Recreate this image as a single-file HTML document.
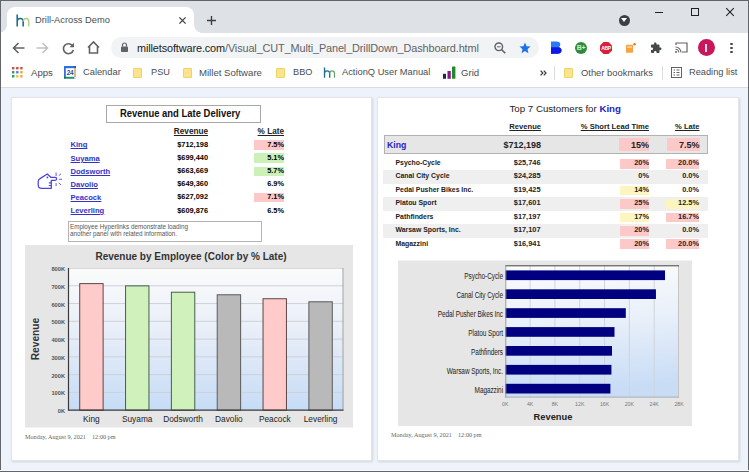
<!DOCTYPE html>
<html><head><meta charset="utf-8">
<style>
*{box-sizing:border-box}
html,body{margin:0;padding:0}
body{width:749px;height:472px;overflow:hidden;position:relative;background:#eef2fa;font-family:"Liberation Sans",sans-serif;color:#000}
.a{position:absolute;white-space:pre}
.ui{font-family:"Liberation Sans",sans-serif;color:#4a4d51}
svg{position:absolute;overflow:visible}
</style></head><body>
<!-- ========== BROWSER CHROME ========== -->
<div class="a" style="left:0;top:0;width:749px;height:33px;background:#dee1e6"></div>
<!-- tab -->
<div class="a" style="left:7px;top:7px;width:187px;height:27px;background:#fff;border-radius:8px 8px 0 0"></div>
<div class="a" style="left:-1px;top:25px;width:8px;height:8px;background:radial-gradient(circle at 0 0,#dee1e6 7.5px,#fff 8px)"></div>
<div class="a" style="left:194px;top:25px;width:8px;height:8px;background:radial-gradient(circle at 100% 0,#dee1e6 7.5px,#fff 8px)"></div>
<svg style="left:15px;top:13.5px" width="16" height="14" viewBox="0 0 16 14">
  <path d="M2.2 0.5 V12.5 M2.2 7.5 Q2.2 4.5 5.2 4.5 Q8.2 4.5 8.2 7.5 V12.5" stroke="#1d6f91" stroke-width="1.6" fill="none"/>
  <path d="M8.2 7.5 Q8.2 4.5 11 4.5 Q13.8 4.5 13.8 7.5 V12.5" stroke="#b9c97e" stroke-width="1.4" fill="none"/>
</svg>
<div class="a ui" style="left:35px;top:14px;font-size:9.3px;line-height:12px">Drill-Across Demo</div>
<svg style="left:178.8px;top:16.8px" width="7" height="7" viewBox="0 0 7 7"><path d="M0.4 0.4 L6.6 6.6 M6.6 0.4 L0.4 6.6" stroke="#3c4043" stroke-width="1.25"/></svg>
<svg style="left:207.3px;top:15.8px" width="9" height="9" viewBox="0 0 9 9"><path d="M4.5 0 V9 M0 4.5 H9" stroke="#3c4043" stroke-width="1.4"/></svg>
<!-- dark circle -->
<div class="a" style="left:618.5px;top:14.5px;width:11px;height:11px;border-radius:50%;background:#3c4043"></div>
<svg style="left:620px;top:17px" width="8" height="6" viewBox="0 0 8 6"><path d="M1 1 H7 L4 5 Z" fill="#fff"/></svg>
<!-- window controls -->
<div class="a" style="left:654.5px;top:11.5px;width:8px;height:1.2px;background:#202124"></div>
<div class="a" style="left:690.5px;top:8px;width:8px;height:8px;border:1.1px solid #202124"></div>
<svg style="left:726px;top:8px" width="8" height="8" viewBox="0 0 8 8"><path d="M0.2 0.2 L7.8 7.8 M7.8 0.2 L0.2 7.8" stroke="#202124" stroke-width="1.05"/></svg>

<!-- toolbar -->
<div class="a" style="left:0;top:33px;width:749px;height:55px;background:#fff;border-bottom:1px solid #dadce0"></div>
<!-- nav icons -->
<svg style="left:12px;top:42px" width="13" height="12" viewBox="0 0 13 12"><path d="M12.5 6 H1.5 M6.5 1 L1.5 6 L6.5 11" stroke="#5f6368" stroke-width="1.6" fill="none"/></svg>
<svg style="left:36px;top:42px" width="13" height="12" viewBox="0 0 13 12"><path d="M0.5 6 H11.5 M6.5 1 L11.5 6 L6.5 11" stroke="#bdc1c6" stroke-width="1.6" fill="none"/></svg>
<svg style="left:62px;top:42px" width="13" height="13" viewBox="0 0 13 13"><path d="M10.8 4.2 A5 5 0 1 0 11.3 8" stroke="#5f6368" stroke-width="1.6" fill="none"/><path d="M12 0.8 V5.2 H7.6 Z" fill="#5f6368"/></svg>
<svg style="left:87px;top:41px" width="13" height="13" viewBox="0 0 13 13"><path d="M1 6.5 L6.5 1 L12 6.5 M2.5 5.5 V12 H10.5 V5.5" stroke="#5f6368" stroke-width="1.6" fill="none" stroke-linejoin="miter"/></svg>
<!-- omnibox -->
<div class="a" style="left:111px;top:37px;width:428px;height:21px;background:#f1f3f4;border-radius:11px"></div>
<svg style="left:121px;top:42px" width="7" height="10" viewBox="0 0 7 10"><path d="M1.5 4.5 V3 A2 2 0 0 1 5.5 3 V4.5" stroke="#5f6368" stroke-width="1.2" fill="none"/><rect x="0" y="4.5" width="7" height="5.5" rx="0.8" fill="#5f6368"/></svg>
<div class="a ui" style="left:137px;top:42px;font-size:10.9px;line-height:13px;letter-spacing:-0.12px;color:#202124">milletsoftware.com<span style="color:#5f6368">/Visual_CUT_Multi_Panel_DrillDown_Dashboard.html</span></div>
<svg style="left:494px;top:42px" width="12" height="12" viewBox="0 0 12 12"><circle cx="4.8" cy="4.8" r="3.8" stroke="#5f6368" stroke-width="1.4" fill="none"/><path d="M7.5 7.5 L11.3 11.3" stroke="#5f6368" stroke-width="1.6"/><path d="M3 4.8 H6.6" stroke="#5f6368" stroke-width="1"/></svg>
<svg style="left:519px;top:42px" width="12" height="12" viewBox="0 0 24 24"><path d="M12 1 L15.1 8.6 L23 9.2 L17 14.5 L18.9 22.5 L12 18.2 L5.1 22.5 L7 14.5 L1 9.2 L8.9 8.6 Z" fill="#1a73e8"/></svg>
<!-- extensions -->
<svg style="left:551px;top:41px" width="11" height="13" viewBox="0 0 11 13"><path d="M0 0.5 H5.5 Q9.3 0.5 9.3 3.4 Q9.3 5 8 5.8 Q10.5 6.8 10.5 9.3 Q10.5 12.7 6.5 12.7 H0 Z" fill="#2a7af2"/><path d="M0 6.3 H6.8 Q10.5 6.6 10.5 9.3 Q10.5 12.7 6.5 12.7 H0 Z" fill="#0c18e6"/></svg>
<div class="a" style="left:575px;top:42px;width:12px;height:12px;border-radius:50%;background:#2e8b3e"></div>
<div class="a" style="left:575px;top:42px;width:12px;height:12px;font:bold 7px/12px 'Liberation Sans',sans-serif;color:#c8f5c8;text-align:center;letter-spacing:-0.3px">B+</div>
<svg style="left:600px;top:42px" width="12" height="12" viewBox="0 0 12 12"><path d="M3.5 0 H8.5 L12 3.5 V8.5 L8.5 12 H3.5 L0 8.5 V3.5 Z" fill="#d9203a"/></svg>
<div class="a" style="left:599px;top:42px;width:14px;height:12px;font:bold 5px/12px 'Liberation Sans',sans-serif;color:#fff;text-align:center;letter-spacing:-0.3px">ABP</div>
<svg style="left:626px;top:43px" width="10" height="10" viewBox="0 0 10 10"><rect x="0" y="1.8" width="7" height="8" rx="0.5" fill="#f7a440"/><rect x="1.2" y="3.3" width="4.6" height="1.6" fill="#fcd59b"/><circle cx="8.6" cy="1.2" r="1.2" fill="#e8703a"/></svg>
<svg style="left:650px;top:42px" width="12" height="12" viewBox="0 0 24 24"><path d="M20.5 11H19V7c0-1.1-.9-2-2-2h-4V3.5C13 2.12 11.88 1 10.5 1S8 2.12 8 3.5V5H4c-1.1 0-1.99.9-1.99 2v3.8H3.5c1.49 0 2.7 1.21 2.7 2.7s-1.21 2.7-2.7 2.7H2V20c0 1.1.9 2 2 2h3.8v-1.5c0-1.49 1.21-2.7 2.7-2.7 1.49 0 2.7 1.21 2.7 2.7V22H17c1.1 0 2-.9 2-2v-4h1.5c1.38 0 2.5-1.12 2.5-2.5S21.88 11 20.5 11z" fill="#45484d"/></svg>
<svg style="left:675px;top:42px" width="13" height="11" viewBox="0 0 13 11"><path d="M1 3 V1 H12 V10 H7" stroke="#5f6368" stroke-width="1.2" fill="none"/><path d="M0.5 5 A5.5 5.5 0 0 1 6 10.5 M0.5 7.2 A3.3 3.3 0 0 1 3.8 10.5" stroke="#5f6368" stroke-width="1.1" fill="none"/><circle cx="1" cy="10" r="1" fill="#5f6368"/></svg>
<div class="a" style="left:697.5px;top:39.2px;width:17px;height:17px;border-radius:50%;background:#c8175a"></div>
<div class="a" style="left:705.2px;top:44px;width:1.6px;height:7.8px;background:#fcd6e4"></div>
<div class="a" style="left:730.3px;top:43px;width:2.3px;height:2.3px;border-radius:50%;background:#45484d;box-shadow:0 3.95px 0 #45484d,0 7.9px 0 #45484d"></div>

<!-- bookmarks -->
<svg style="left:12px;top:67px" width="12" height="12" viewBox="0 0 12 12"><rect x="0.0" y="0.00" width="2.4" height="2.4" fill="#d54b3d"/><rect x="4.1" y="0.00" width="2.4" height="2.4" fill="#d54b3d"/><rect x="8.2" y="0.00" width="2.4" height="2.4" fill="#d54b3d"/><rect x="0.0" y="4.05" width="2.4" height="2.4" fill="#2a9a5a"/><rect x="4.1" y="4.05" width="2.4" height="2.4" fill="#4a86e8"/><rect x="8.2" y="4.05" width="2.4" height="2.4" fill="#f0a830"/><rect x="0.0" y="8.10" width="2.4" height="2.4" fill="#2a9a5a"/><rect x="4.1" y="8.10" width="2.4" height="2.4" fill="#f4c030"/><rect x="8.2" y="8.10" width="2.4" height="2.4" fill="#f0a830"/></svg>
<div class="a ui" style="left:31px;top:65.9px;font-size:9.6px;line-height:13px">Apps</div>
<svg style="left:64px;top:66.3px" width="12" height="12.5" viewBox="0 0 12 12.5"><rect x="0" y="0" width="12" height="12.5" fill="#2f6fe0"/><rect x="10.3" y="1.8" width="1.7" height="9" fill="#f6bf26"/><rect x="1.8" y="10.8" width="8.5" height="1.7" fill="#1e9a4a"/><rect x="0" y="10.8" width="1.8" height="1.7" fill="#1b6e3a"/><rect x="10.3" y="0" width="1.7" height="1.8" fill="#1a5a8a"/><rect x="10.3" y="10.8" width="1.7" height="1.7" fill="#fff"/><rect x="1.8" y="2.2" width="8.5" height="8.6" fill="#fff"/><text x="6" y="9.2" font-size="6.4" font-family="Liberation Sans" fill="#2a4aa0" text-anchor="middle" font-weight="bold" letter-spacing="-0.3">24</text></svg>
<div class="a ui" style="left:83px;top:65.9px;font-size:9.3px;line-height:13px">Calendar</div>
<div class="a" style="left:133px;top:67.5px;width:9px;height:10.5px;background:#fbe48c;border:1px solid #ecd36a;border-radius:1px"></div>
<div class="a ui" style="left:151px;top:65.9px;font-size:9.2px;line-height:13px">PSU</div>
<div class="a" style="left:183px;top:67.5px;width:9px;height:10.5px;background:#fbe48c;border:1px solid #ecd36a;border-radius:1px"></div>
<div class="a ui" style="left:199px;top:65.9px;font-size:9.6px;line-height:13px">Millet Software</div>
<div class="a" style="left:276px;top:67.5px;width:9px;height:10.5px;background:#fbe48c;border:1px solid #ecd36a;border-radius:1px"></div>
<div class="a ui" style="left:293px;top:65.9px;font-size:9.2px;line-height:13px">BBO</div>
<svg style="left:322px;top:67px" width="15" height="12" viewBox="0 0 16 14">
  <path d="M2.2 0.5 V12.5 M2.2 7.5 Q2.2 4.5 5.2 4.5 Q8.2 4.5 8.2 7.5 V12.5" stroke="#1d6f91" stroke-width="1.6" fill="none"/>
  <path d="M8.2 7.5 Q8.2 4.5 11 4.5 Q13.8 4.5 13.8 7.5 V12.5" stroke="#6aa06a" stroke-width="1.4" fill="none"/>
</svg>
<div class="a ui" style="left:342px;top:65.9px;font-size:9.3px;line-height:13px">ActionQ User Manual</div>
<svg style="left:443px;top:66px" width="13" height="13" viewBox="0 0 13 13"><rect x="0" y="7.8" width="3" height="5" fill="#1f2a4a"/><rect x="4.5" y="5" width="3.3" height="7.8" fill="#8a1a8a"/><rect x="9" y="0.6" width="3.4" height="12.2" rx="0.6" fill="#1e8a2a"/></svg>
<div class="a ui" style="left:461px;top:65.9px;font-size:9.6px;line-height:13px">Grid</div>
<svg style="left:539.5px;top:70px" width="7" height="6" viewBox="0 0 7 6"><path d="M0.6 0.6 L2.8 3 L0.6 5.4 M3.8 0.6 L6 3 L3.8 5.4" stroke="#3c4043" stroke-width="1.3" fill="none"/></svg>
<div class="a" style="left:554px;top:66px;width:1px;height:14px;background:#dadce0"></div>
<div class="a" style="left:564px;top:67.5px;width:9px;height:10.5px;background:#fbe48c;border:1px solid #ecd36a;border-radius:1px"></div>
<div class="a ui" style="left:581px;top:65.9px;font-size:9.4px;line-height:13px">Other bookmarks</div>
<div class="a" style="left:662px;top:66px;width:1px;height:14px;background:#dadce0"></div>
<svg style="left:671px;top:67px" width="11" height="11" viewBox="0 0 11 11"><rect x="0.5" y="0.5" width="10" height="10" stroke="#5f6368" fill="none"/><path d="M2.5 3 H4 M2.5 5.5 H4 M2.5 8 H4 M5.5 3 H8.5 M5.5 5.5 H8.5 M5.5 8 H8.5" stroke="#5f6368"/></svg>
<div class="a ui" style="left:689px;top:65.9px;font-size:9.25px;line-height:13px">Reading list</div>

<!-- frame -->
<div class="a" style="left:0;top:0;width:749px;height:1px;background:#62666b"></div>
<div class="a" style="left:0;top:0;width:1px;height:472px;background:#62666b"></div>
<div class="a" style="left:748px;top:0;width:1px;height:472px;background:#62666b"></div>
<div class="a" style="left:0;top:470px;width:749px;height:1px;background:#f8faff"></div><div class="a" style="left:0;top:471px;width:749px;height:1px;background:#62666b"></div>

<!-- ========== PAGE ========== -->
<div id="lp" class="a" style="left:11px;top:97px;width:361px;height:364px;background:#fff;border:1px solid #e2e4ea;box-shadow:1px 1px 2px rgba(0,0,0,0.12)"></div>
<div id="rp" class="a" style="left:377px;top:97px;width:362px;height:364px;background:#fff;border:1px solid #e2e4ea;box-shadow:1px 1px 2px rgba(0,0,0,0.12)"></div>


<!-- ===== LEFT PANEL ===== -->
<div class="a" style="left:106px;top:105px;width:155px;height:18px;border:1px solid #a8a8a8;background:#fff"></div>
<div class="a" style="left:120.3px;top:106px;font:bold 10.4px/15px 'Liberation Sans',sans-serif;color:#111;transform:scaleX(0.91);transform-origin:0 50%">Revenue and Late Delivery</div>
<div class="a" style="left:150px;top:126.8px;width:58px;text-align:right;font:bold 8.2px/10px 'Liberation Sans',sans-serif;color:#222;text-decoration:underline">Revenue</div>
<div class="a" style="left:230px;top:126.8px;width:54px;text-align:right;font:bold 8.2px/10px 'Liberation Sans',sans-serif;color:#222;text-decoration:underline">% Late</div>
<div class="a" style="left:70.5px;top:140.3px;font:bold 7.6px/10px 'Liberation Sans',sans-serif;color:#3232c8;text-decoration:underline">King</div>
<div class="a" style="left:150px;top:139.8px;width:58px;text-align:right;font:bold 7.4px/10px 'Liberation Sans',sans-serif">$712,198</div>
<div class="a" style="left:254px;top:140.2px;width:30px;height:9.6px;background:#fcc8c8"></div>
<div class="a" style="left:230px;top:139.8px;width:54px;text-align:right;font:bold 7.4px/10px 'Liberation Sans',sans-serif">7.5%</div>
<div class="a" style="left:70.5px;top:153.5px;font:bold 7.6px/10px 'Liberation Sans',sans-serif;color:#3232c8;text-decoration:underline">Suyama</div>
<div class="a" style="left:150px;top:153.0px;width:58px;text-align:right;font:bold 7.4px/10px 'Liberation Sans',sans-serif">$699,440</div>
<div class="a" style="left:254px;top:153.4px;width:30px;height:9.6px;background:#ccf0b8"></div>
<div class="a" style="left:230px;top:153.0px;width:54px;text-align:right;font:bold 7.4px/10px 'Liberation Sans',sans-serif">5.1%</div>
<div class="a" style="left:70.5px;top:166.7px;font:bold 7.6px/10px 'Liberation Sans',sans-serif;color:#3232c8;text-decoration:underline">Dodsworth</div>
<div class="a" style="left:150px;top:166.2px;width:58px;text-align:right;font:bold 7.4px/10px 'Liberation Sans',sans-serif">$663,669</div>
<div class="a" style="left:254px;top:166.6px;width:30px;height:9.6px;background:#ccf0b8"></div>
<div class="a" style="left:230px;top:166.2px;width:54px;text-align:right;font:bold 7.4px/10px 'Liberation Sans',sans-serif">5.7%</div>
<div class="a" style="left:70.5px;top:179.8px;font:bold 7.6px/10px 'Liberation Sans',sans-serif;color:#3232c8;text-decoration:underline">Davolio</div>
<div class="a" style="left:150px;top:179.3px;width:58px;text-align:right;font:bold 7.4px/10px 'Liberation Sans',sans-serif">$649,360</div>
<div class="a" style="left:230px;top:179.3px;width:54px;text-align:right;font:bold 7.4px/10px 'Liberation Sans',sans-serif">6.9%</div>
<div class="a" style="left:70.5px;top:192.9px;font:bold 7.6px/10px 'Liberation Sans',sans-serif;color:#3232c8;text-decoration:underline">Peacock</div>
<div class="a" style="left:150px;top:192.4px;width:58px;text-align:right;font:bold 7.4px/10px 'Liberation Sans',sans-serif">$627,092</div>
<div class="a" style="left:254px;top:192.8px;width:30px;height:9.6px;background:#fcc8c8"></div>
<div class="a" style="left:230px;top:192.4px;width:54px;text-align:right;font:bold 7.4px/10px 'Liberation Sans',sans-serif">7.1%</div>
<div class="a" style="left:70.5px;top:206.0px;font:bold 7.6px/10px 'Liberation Sans',sans-serif;color:#3232c8;text-decoration:underline">Leverling</div>
<div class="a" style="left:150px;top:205.5px;width:58px;text-align:right;font:bold 7.4px/10px 'Liberation Sans',sans-serif">$609,876</div>
<div class="a" style="left:230px;top:205.5px;width:54px;text-align:right;font:bold 7.4px/10px 'Liberation Sans',sans-serif">6.5%</div>

<svg style="left:37px;top:171px" width="26" height="19" viewBox="0 0 26 19">
 <path d="M1.2 10.5 Q1.2 8.6 3 7.6 L10.3 3 L13.8 6.3 H18.2 Q19.6 6.3 19.6 7.8 Q19.6 9.3 18.2 9.3 H14.3 V17.3 H4.5 Q1.2 17.3 1.2 14 Z" stroke="#4c44dc" stroke-width="1.25" fill="none" stroke-linejoin="round"/>
 <path d="M11.8 11.9 H14.3 M11.8 14.5 H14.3" stroke="#4c44dc" stroke-width="1.2"/>
 <circle cx="10.4" cy="6.4" r="0.9" fill="#4c44dc"/>
 <path d="M19.1 1.6 V5.1 M19.1 12.1 V15.1 M21.8 4.6 L24.1 2.7 M21.8 12 L24.1 13.9 M21.9 8.3 H25" stroke="#5a52e8" stroke-width="0.95"/>
</svg>
<div class="a" style="left:68px;top:221px;width:194px;height:21px;border:1px solid #b4b4b4"></div>
<div class="a" style="left:70px;top:222.5px;font:6.3px/7.2px 'Liberation Sans',sans-serif;color:#555">Employee Hyperlinks demonstrate loading
another panel with related information.</div>

<!-- left chart -->
<svg style="left:0;top:0" width="749" height="472" viewBox="0 0 749 472">
<defs><linearGradient id="g1" x1="0" y1="0" x2="0" y2="1"><stop offset="0" stop-color="#fbfbfb"/><stop offset="0.45" stop-color="#e8eef8"/><stop offset="1" stop-color="#c6dcf6"/></linearGradient><linearGradient id="g2" x1="0" y1="0" x2="0.12" y2="1"><stop offset="0" stop-color="#fcfcfc"/><stop offset="0.45" stop-color="#eaf1fa"/><stop offset="1" stop-color="#c8dcf6"/></linearGradient></defs>
<rect x="25" y="245" width="328" height="182.5" fill="#e6e6e6"/>
<rect x="68.5" y="268.0" width="275.0" height="142.2" fill="url(#g1)"/>
<line x1="68.5" y1="285.77" x2="343.5" y2="285.77" stroke="#cdd1d8" stroke-width="1"/>
<line x1="68.5" y1="303.55" x2="343.5" y2="303.55" stroke="#cdd1d8" stroke-width="1"/>
<line x1="68.5" y1="321.32" x2="343.5" y2="321.32" stroke="#cdd1d8" stroke-width="1"/>
<line x1="68.5" y1="339.10" x2="343.5" y2="339.10" stroke="#cdd1d8" stroke-width="1"/>
<line x1="68.5" y1="356.88" x2="343.5" y2="356.88" stroke="#cdd1d8" stroke-width="1"/>
<line x1="68.5" y1="374.65" x2="343.5" y2="374.65" stroke="#cdd1d8" stroke-width="1"/>
<line x1="68.5" y1="392.42" x2="343.5" y2="392.42" stroke="#cdd1d8" stroke-width="1"/>
<line x1="68.5" y1="268.5" x2="343.5" y2="268.5" stroke="#d8d8d8" stroke-width="1"/>
<line x1="343.0" y1="268.0" x2="343.0" y2="410.2" stroke="#a0a0a0" stroke-width="1"/>
<rect x="79.72" y="283.61" width="23.4" height="126.59" fill="#ffcaca" stroke="#5e4646" stroke-width="1"/>
<rect x="125.55" y="285.87" width="23.4" height="124.33" fill="#d0f0bc" stroke="#46604a" stroke-width="1"/>
<rect x="171.38" y="292.23" width="23.4" height="117.97" fill="#d0f0bc" stroke="#46604a" stroke-width="1"/>
<rect x="217.22" y="294.78" width="23.4" height="115.42" fill="#b9b9b9" stroke="#5a5a5a" stroke-width="1"/>
<rect x="263.05" y="298.73" width="23.4" height="111.47" fill="#ffcaca" stroke="#5e4646" stroke-width="1"/>
<rect x="308.88" y="301.79" width="23.4" height="108.41" fill="#b9b9b9" stroke="#5a5a5a" stroke-width="1"/>
<line x1="68.5" y1="268.0" x2="68.5" y2="410.7" stroke="#3a3a3a" stroke-width="1.2"/>
<line x1="68.5" y1="410.2" x2="343.5" y2="410.2" stroke="#3a3a3a" stroke-width="1.2"/>
</svg>
<div class="a" style="left:35px;top:265.0px;width:30px;text-align:right;font:bold 5.7px/8px 'Liberation Sans',sans-serif;color:#555">800K</div>
<div class="a" style="left:35px;top:282.8px;width:30px;text-align:right;font:bold 5.7px/8px 'Liberation Sans',sans-serif;color:#555">700K</div>
<div class="a" style="left:35px;top:300.6px;width:30px;text-align:right;font:bold 5.7px/8px 'Liberation Sans',sans-serif;color:#555">600K</div>
<div class="a" style="left:35px;top:318.3px;width:30px;text-align:right;font:bold 5.7px/8px 'Liberation Sans',sans-serif;color:#555">500K</div>
<div class="a" style="left:35px;top:336.1px;width:30px;text-align:right;font:bold 5.7px/8px 'Liberation Sans',sans-serif;color:#555">400K</div>
<div class="a" style="left:35px;top:353.9px;width:30px;text-align:right;font:bold 5.7px/8px 'Liberation Sans',sans-serif;color:#555">300K</div>
<div class="a" style="left:35px;top:371.6px;width:30px;text-align:right;font:bold 5.7px/8px 'Liberation Sans',sans-serif;color:#555">200K</div>
<div class="a" style="left:35px;top:389.4px;width:30px;text-align:right;font:bold 5.7px/8px 'Liberation Sans',sans-serif;color:#555">100K</div>
<div class="a" style="left:35px;top:407.2px;width:30px;text-align:right;font:bold 5.7px/8px 'Liberation Sans',sans-serif;color:#555">0K</div>
<div class="a" style="left:61.4px;top:412.5px;width:60px;text-align:center;font:8.3px/12px 'Liberation Sans',sans-serif;color:#222">King</div>
<div class="a" style="left:107.2px;top:412.5px;width:60px;text-align:center;font:8.3px/12px 'Liberation Sans',sans-serif;color:#222">Suyama</div>
<div class="a" style="left:153.1px;top:412.5px;width:60px;text-align:center;font:8.3px/12px 'Liberation Sans',sans-serif;color:#222">Dodsworth</div>
<div class="a" style="left:198.9px;top:412.5px;width:60px;text-align:center;font:8.3px/12px 'Liberation Sans',sans-serif;color:#222">Davolio</div>
<div class="a" style="left:244.8px;top:412.5px;width:60px;text-align:center;font:8.3px/12px 'Liberation Sans',sans-serif;color:#222">Peacock</div>
<div class="a" style="left:290.6px;top:412.5px;width:60px;text-align:center;font:8.3px/12px 'Liberation Sans',sans-serif;color:#222">Leverling</div>
<div class="a" style="left:14px;top:333px;width:44px;height:12px;transform:rotate(-90deg);text-align:center;font:bold 10.2px/12px 'Liberation Sans',sans-serif;color:#333">Revenue</div>
<div class="a" style="left:27px;top:250px;width:328px;text-align:center;font:bold 10px/14px 'Liberation Sans',sans-serif;color:#333">Revenue by Employee (Color by % Late)</div>
<div class="a" style="left:25px;top:432px;font:6.2px/9px 'Liberation Serif',serif;color:#666">Monday, August 9, 2021<span style="margin-left:6px">12:00 pm</span></div>

<!-- ===== RIGHT PANEL ===== -->
<div class="a" style="left:509.5px;top:102px;font:9.7px/13px 'Liberation Sans',sans-serif;color:#222">Top 7 Customers for <b style="color:#2323c8">King</b></div>
<div class="a" style="left:480px;top:121.5px;width:61px;text-align:right;font:bold 7.6px/10px 'Liberation Sans',sans-serif;color:#222;text-decoration:underline">Revenue</div>
<div class="a" style="left:560px;top:121.5px;width:89px;text-align:right;font:bold 7.6px/10px 'Liberation Sans',sans-serif;color:#222;text-decoration:underline">% Short Lead Time</div>
<div class="a" style="left:660px;top:121.5px;width:39.5px;text-align:right;font:bold 7.6px/10px 'Liberation Sans',sans-serif;color:#222;text-decoration:underline">% Late</div>
<div class="a" style="left:383.5px;top:134.5px;width:324px;height:19.5px;background:#e6e6e6;border:1.8px solid #b2b2b2"></div>
<div class="a" style="left:619px;top:138px;width:30px;height:13px;background:#fcc8c8"></div>
<div class="a" style="left:666.5px;top:138px;width:33px;height:13px;background:#fcc8c8"></div>
<div class="a" style="left:387px;top:138.5px;font:bold 8.7px/13px 'Liberation Sans',sans-serif;color:#2323c8">King</div>
<div class="a" style="left:480px;top:138.5px;width:61px;text-align:right;font:bold 9px/13px 'Liberation Sans',sans-serif;color:#222">$712,198</div>
<div class="a" style="left:590px;top:138.5px;width:59px;text-align:right;font:bold 9px/13px 'Liberation Sans',sans-serif;color:#222">15%</div>
<div class="a" style="left:640px;top:138.5px;width:59.5px;text-align:right;font:bold 9px/13px 'Liberation Sans',sans-serif;color:#222">7.5%</div>
<div class="a" style="left:620px;top:158.91px;width:29px;height:9.6px;background:#fcc8c8"></div>
<div class="a" style="left:666px;top:158.91px;width:33px;height:9.6px;background:#fcc8c8"></div>
<div class="a" style="left:395.5px;top:158.02px;font:bold 6.9px/10px 'Liberation Sans',sans-serif;color:#222">Psycho-Cycle</div>
<div class="a" style="left:480px;top:158.02px;width:60.5px;text-align:right;font:bold 7.4px/10px 'Liberation Sans',sans-serif;color:#222">$25,746</div>
<div class="a" style="left:600px;top:158.02px;width:49px;text-align:right;font:bold 7.4px/10px 'Liberation Sans',sans-serif;color:#222">20%</div>
<div class="a" style="left:650px;top:158.02px;width:49px;text-align:right;font:bold 7.4px/10px 'Liberation Sans',sans-serif;color:#222">20.0%</div>
<div class="a" style="left:383px;top:170.43px;width:324.5px;height:13.43px;background:#efefef"></div>
<div class="a" style="left:395.5px;top:171.45px;font:bold 6.9px/10px 'Liberation Sans',sans-serif;color:#222">Canal City Cycle</div>
<div class="a" style="left:480px;top:171.45px;width:60.5px;text-align:right;font:bold 7.4px/10px 'Liberation Sans',sans-serif;color:#222">$24,285</div>
<div class="a" style="left:600px;top:171.45px;width:49px;text-align:right;font:bold 7.4px/10px 'Liberation Sans',sans-serif;color:#222">0%</div>
<div class="a" style="left:650px;top:171.45px;width:49px;text-align:right;font:bold 7.4px/10px 'Liberation Sans',sans-serif;color:#222">0.0%</div>
<div class="a" style="left:620px;top:185.78px;width:29px;height:9.6px;background:#fdf5c0"></div>
<div class="a" style="left:395.5px;top:184.88px;font:bold 6.9px/10px 'Liberation Sans',sans-serif;color:#222">Pedal Pusher Bikes Inc.</div>
<div class="a" style="left:480px;top:184.88px;width:60.5px;text-align:right;font:bold 7.4px/10px 'Liberation Sans',sans-serif;color:#222">$19,425</div>
<div class="a" style="left:600px;top:184.88px;width:49px;text-align:right;font:bold 7.4px/10px 'Liberation Sans',sans-serif;color:#222">14%</div>
<div class="a" style="left:650px;top:184.88px;width:49px;text-align:right;font:bold 7.4px/10px 'Liberation Sans',sans-serif;color:#222">0.0%</div>
<div class="a" style="left:383px;top:197.29px;width:324.5px;height:13.43px;background:#efefef"></div>
<div class="a" style="left:620px;top:199.20px;width:29px;height:9.6px;background:#fcc8c8"></div>
<div class="a" style="left:666px;top:199.20px;width:33px;height:9.6px;background:#fdf5c0"></div>
<div class="a" style="left:395.5px;top:198.30px;font:bold 6.9px/10px 'Liberation Sans',sans-serif;color:#222">Platou Sport</div>
<div class="a" style="left:480px;top:198.30px;width:60.5px;text-align:right;font:bold 7.4px/10px 'Liberation Sans',sans-serif;color:#222">$17,601</div>
<div class="a" style="left:600px;top:198.30px;width:49px;text-align:right;font:bold 7.4px/10px 'Liberation Sans',sans-serif;color:#222">25%</div>
<div class="a" style="left:650px;top:198.30px;width:49px;text-align:right;font:bold 7.4px/10px 'Liberation Sans',sans-serif;color:#222">12.5%</div>
<div class="a" style="left:620px;top:212.63px;width:29px;height:9.6px;background:#fdf5c0"></div>
<div class="a" style="left:666px;top:212.63px;width:33px;height:9.6px;background:#fcc8c8"></div>
<div class="a" style="left:395.5px;top:211.74px;font:bold 6.9px/10px 'Liberation Sans',sans-serif;color:#222">Pathfinders</div>
<div class="a" style="left:480px;top:211.74px;width:60.5px;text-align:right;font:bold 7.4px/10px 'Liberation Sans',sans-serif;color:#222">$17,197</div>
<div class="a" style="left:600px;top:211.74px;width:49px;text-align:right;font:bold 7.4px/10px 'Liberation Sans',sans-serif;color:#222">17%</div>
<div class="a" style="left:650px;top:211.74px;width:49px;text-align:right;font:bold 7.4px/10px 'Liberation Sans',sans-serif;color:#222">16.7%</div>
<div class="a" style="left:383px;top:224.15px;width:324.5px;height:13.43px;background:#efefef"></div>
<div class="a" style="left:620px;top:226.06px;width:29px;height:9.6px;background:#fcc8c8"></div>
<div class="a" style="left:395.5px;top:225.17px;font:bold 6.9px/10px 'Liberation Sans',sans-serif;color:#222">Warsaw Sports, Inc.</div>
<div class="a" style="left:480px;top:225.17px;width:60.5px;text-align:right;font:bold 7.4px/10px 'Liberation Sans',sans-serif;color:#222">$17,107</div>
<div class="a" style="left:600px;top:225.17px;width:49px;text-align:right;font:bold 7.4px/10px 'Liberation Sans',sans-serif;color:#222">20%</div>
<div class="a" style="left:650px;top:225.17px;width:49px;text-align:right;font:bold 7.4px/10px 'Liberation Sans',sans-serif;color:#222">0.0%</div>
<div class="a" style="left:620px;top:239.49px;width:29px;height:9.6px;background:#fcc8c8"></div>
<div class="a" style="left:666px;top:239.49px;width:33px;height:9.6px;background:#fcc8c8"></div>
<div class="a" style="left:395.5px;top:238.59px;font:bold 6.9px/10px 'Liberation Sans',sans-serif;color:#222">Magazzini</div>
<div class="a" style="left:480px;top:238.59px;width:60.5px;text-align:right;font:bold 7.4px/10px 'Liberation Sans',sans-serif;color:#222">$16,941</div>
<div class="a" style="left:600px;top:238.59px;width:49px;text-align:right;font:bold 7.4px/10px 'Liberation Sans',sans-serif;color:#222">20%</div>
<div class="a" style="left:650px;top:238.59px;width:49px;text-align:right;font:bold 7.4px/10px 'Liberation Sans',sans-serif;color:#222">20.0%</div>
<svg style="left:0;top:0" width="749" height="472" viewBox="0 0 749 472">
<rect x="398" y="260.5" width="294" height="165.6" fill="#e6e6e6"/>
<rect x="505.3" y="265.3" width="173.7" height="132.3" fill="url(#g2)"/>
<line x1="530.11" y1="265.3" x2="530.11" y2="397.6" stroke="#d0d4da" stroke-width="1"/>
<line x1="554.93" y1="265.3" x2="554.93" y2="397.6" stroke="#d0d4da" stroke-width="1"/>
<line x1="579.74" y1="265.3" x2="579.74" y2="397.6" stroke="#d0d4da" stroke-width="1"/>
<line x1="604.56" y1="265.3" x2="604.56" y2="397.6" stroke="#d0d4da" stroke-width="1"/>
<line x1="629.37" y1="265.3" x2="629.37" y2="397.6" stroke="#d0d4da" stroke-width="1"/>
<line x1="654.19" y1="265.3" x2="654.19" y2="397.6" stroke="#d0d4da" stroke-width="1"/>
<line x1="678.5" y1="265.3" x2="678.5" y2="397.6" stroke="#c4c4c4" stroke-width="1"/>
<line x1="505.3" y1="397.1" x2="679.0" y2="397.1" stroke="#b0b0b0" stroke-width="1"/>
<rect x="505.3" y="270.40" width="159.72" height="9.7" fill="#000080"/>
<rect x="505.3" y="289.30" width="150.65" height="9.7" fill="#000080"/>
<rect x="505.3" y="308.20" width="120.50" height="9.7" fill="#000080"/>
<rect x="505.3" y="327.10" width="109.19" height="9.7" fill="#000080"/>
<rect x="505.3" y="346.00" width="106.68" height="9.7" fill="#000080"/>
<rect x="505.3" y="364.90" width="106.12" height="9.7" fill="#000080"/>
<rect x="505.3" y="383.80" width="105.09" height="9.7" fill="#000080"/>
<line x1="505.3" y1="265.8" x2="679.0" y2="265.8" stroke="#404040" stroke-width="1"/>
<line x1="505.8" y1="265.3" x2="505.8" y2="397.6" stroke="#9a9a9a" stroke-width="1"/>
</svg>
<div class="a" style="left:402.5px;top:271.25px;width:100px;text-align:right;font:8.3px/11px 'Liberation Sans',sans-serif;color:#222;transform:scaleX(0.78);transform-origin:100% 50%;letter-spacing:-0.1px">Psycho-Cycle</div>
<div class="a" style="left:402.5px;top:290.15px;width:100px;text-align:right;font:8.3px/11px 'Liberation Sans',sans-serif;color:#222;transform:scaleX(0.78);transform-origin:100% 50%;letter-spacing:-0.1px">Canal City Cycle</div>
<div class="a" style="left:402.5px;top:309.05px;width:100px;text-align:right;font:8.3px/11px 'Liberation Sans',sans-serif;color:#222;transform:scaleX(0.78);transform-origin:100% 50%;letter-spacing:-0.1px">Pedal Pusher Bikes Inc</div>
<div class="a" style="left:402.5px;top:327.95px;width:100px;text-align:right;font:8.3px/11px 'Liberation Sans',sans-serif;color:#222;transform:scaleX(0.78);transform-origin:100% 50%;letter-spacing:-0.1px">Platou Sport</div>
<div class="a" style="left:402.5px;top:346.85px;width:100px;text-align:right;font:8.3px/11px 'Liberation Sans',sans-serif;color:#222;transform:scaleX(0.78);transform-origin:100% 50%;letter-spacing:-0.1px">Pathfinders</div>
<div class="a" style="left:402.5px;top:365.75px;width:100px;text-align:right;font:8.3px/11px 'Liberation Sans',sans-serif;color:#222;transform:scaleX(0.78);transform-origin:100% 50%;letter-spacing:-0.1px">Warsaw Sports, Inc.</div>
<div class="a" style="left:402.5px;top:384.65px;width:100px;text-align:right;font:8.3px/11px 'Liberation Sans',sans-serif;color:#222;transform:scaleX(0.78);transform-origin:100% 50%;letter-spacing:-0.1px">Magazzini</div>
<div class="a" style="left:490.30px;top:400px;width:30px;text-align:center;font:5.2px/8px 'Liberation Sans',sans-serif;color:#777">0K</div>
<div class="a" style="left:515.11px;top:400px;width:30px;text-align:center;font:5.2px/8px 'Liberation Sans',sans-serif;color:#777">4K</div>
<div class="a" style="left:539.93px;top:400px;width:30px;text-align:center;font:5.2px/8px 'Liberation Sans',sans-serif;color:#777">8K</div>
<div class="a" style="left:564.74px;top:400px;width:30px;text-align:center;font:5.2px/8px 'Liberation Sans',sans-serif;color:#777">12K</div>
<div class="a" style="left:589.56px;top:400px;width:30px;text-align:center;font:5.2px/8px 'Liberation Sans',sans-serif;color:#777">16K</div>
<div class="a" style="left:614.37px;top:400px;width:30px;text-align:center;font:5.2px/8px 'Liberation Sans',sans-serif;color:#777">20K</div>
<div class="a" style="left:639.19px;top:400px;width:30px;text-align:center;font:5.2px/8px 'Liberation Sans',sans-serif;color:#777">24K</div>
<div class="a" style="left:664.00px;top:400px;width:30px;text-align:center;font:5.2px/8px 'Liberation Sans',sans-serif;color:#777">28K</div>
<div class="a" style="left:503px;top:411px;width:100px;text-align:center;font:bold 9.3px/13px 'Liberation Sans',sans-serif;color:#222">Revenue</div>
<div class="a" style="left:391px;top:430px;font:6.2px/9px 'Liberation Serif',serif;color:#666">Monday, August 9, 2021<span style="margin-left:6px">12:00 pm</span></div>

</body></html>
